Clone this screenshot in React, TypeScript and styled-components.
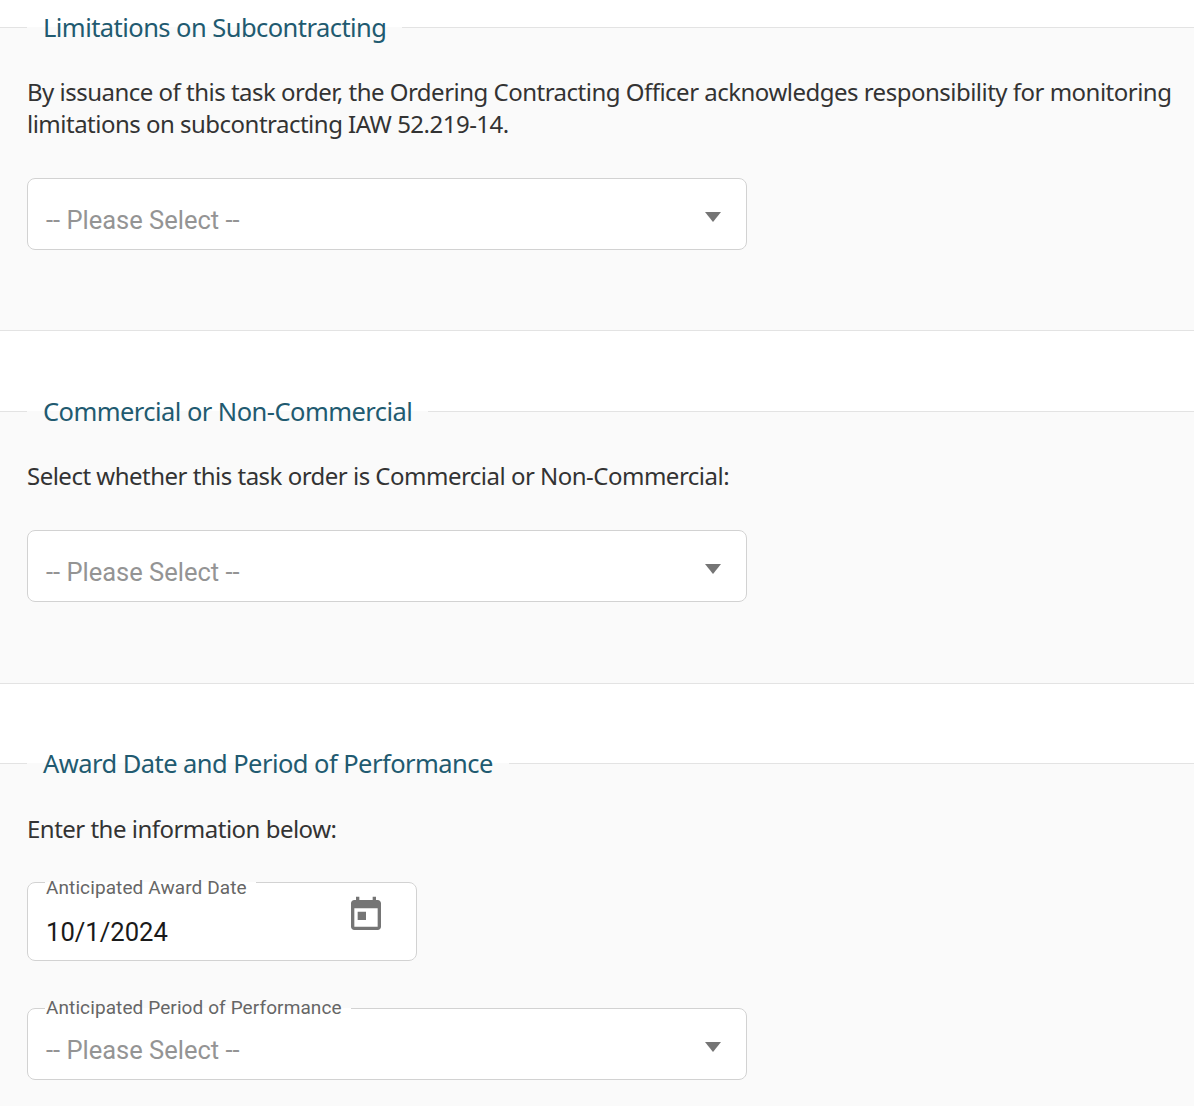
import styled, { createGlobalStyle } from 'styled-components'

const GlobalStyle = createGlobalStyle`
    html, body {
        margin: 0;
        padding: 0;
        background: #fff;
    }
    body {
        font-family: "Noto Sans", "Open Sans", sans-serif;
        color: #333;
    }
`

const Page = styled.div`
    width: 1194px;
    height: 1106px;
    overflow: hidden;
    padding-top: 9px;
    box-sizing: border-box;
`

const Section = styled.fieldset<{ $gap?: number; $pad?: number }>`
    margin: 0 0 ${p => p.$gap ?? 61}px;
    padding: 0 20px ${p => p.$pad ?? 80}px 27px;
    min-width: 0;
    background: #fafafa;
    border: none;
    border-top: 1px solid #e3e3e3;
    border-bottom: 1px solid #e3e3e3;
`

const SectionTitle = styled.legend`
    margin-left: 0;
    padding: 0 16px;
    height: 36px;
    line-height: 36px;
    font-size: 25.5px;
    letter-spacing: -0.55px;
    color: #215a70;
`

const Intro = styled.p`
    margin: 31px 0 38px;
    font-size: 24px;
    line-height: 32px;
    letter-spacing: -0.51px;
`

const Compact = styled(Intro)`
    margin: 32px 0 27px;
`

const Box = styled.fieldset<{ $wide?: boolean }>`
    display: block;
    box-sizing: border-box;
    width: ${p => (p.$wide ? '720px' : '390px')};
    margin: 0;
    padding: 0 25px 0 18px;
    background: #fff;
    border: 1px solid #d2d2d2;
    border-radius: 8px;
    font-family: Roboto, sans-serif;

    & + & {
        margin-top: 37px;
    }
`

const BoxLabel = styled.legend`
    margin-left: -1px;
    padding: 0 9px 0 1px;
    height: 20px;
    line-height: 20px;
    font-size: 19px;
    letter-spacing: 0.1px;
    color: #666;
`

const LabelText = styled.span<{ $drop?: number }>`
    position: relative;
    top: ${p => p.$drop ?? 0}px;
`

const Row = styled.div<{ $height: number; $top: number }>`
    display: flex;
    justify-content: space-between;
    align-items: flex-start;
    height: ${p => p.$height}px;
    padding-top: ${p => p.$top}px;
    box-sizing: border-box;
`

const Placeholder = styled.span`
    font-size: 25.5px;
    line-height: 32px;
    color: #949494;
`

const Value = styled.span`
    font-size: 25.6px;
    line-height: 32px;
    color: #1a1a1a;
`

const Caret = styled.span`
    width: 0;
    height: 0;
    margin-top: 8px;
    border-left: 8px solid transparent;
    border-right: 8px solid transparent;
    border-top: 10px solid #757575;
`

const CalendarButton = styled.span`
    display: flex;
    margin: -21px 5px 0 0;
    color: #757575;
`

const Select = ({ label }: { label?: string }) => (
    <Box $wide>
        {label && <BoxLabel><LabelText>{label}</LabelText></BoxLabel>}
        <Row $height={label ? 61 : 70} $top={label ? 16 : 25}>
            <Placeholder>-- Please Select --</Placeholder>
            <Caret />
        </Row>
    </Box>
)

export default function App() {
    return (
        <Page>
            <GlobalStyle />
            <Section $gap={62}>
                <SectionTitle>Limitations on Subcontracting</SectionTitle>
                <Intro>
                    By issuance of this task order, the Ordering Contracting Officer acknowledges responsibility for monitoring limitations on subcontracting IAW 52.219-14.
                </Intro>
                <Select />
            </Section>

            <Section $pad={81}>
                <SectionTitle>Commercial or Non-Commercial</SectionTitle>
                <Intro>Select whether this task order is Commercial or Non-Commercial:</Intro>
                <Select />
            </Section>

            <Section>
                <SectionTitle>Award Date and Period of Performance</SectionTitle>
                <Compact>Enter the information below:</Compact>
                <Box>
                    <BoxLabel><LabelText $drop={6}>Anticipated Award Date</LabelText></BoxLabel>
                    <Row $height={68} $top={24}>
                        <Value>10/1/2024</Value>
                        <CalendarButton>
                            <svg width="40" height="40" viewBox="0 0 24 24" fill="currentColor">
                                <path d="M19 3h-1V1h-2v2H8V1H6v2H5c-1.11 0-1.99.9-1.99 2L3 19c0 1.1.89 2 2 2h14c1.1 0 2-.9 2-2V5c0-1.1-.9-2-2-2zm0 16H5V8h14v11zM7 10h5v5H7z" />
                            </svg>
                        </CalendarButton>
                    </Row>
                </Box>
                <Select label="Anticipated Period of Performance" />
            </Section>
        </Page>
    )
}
